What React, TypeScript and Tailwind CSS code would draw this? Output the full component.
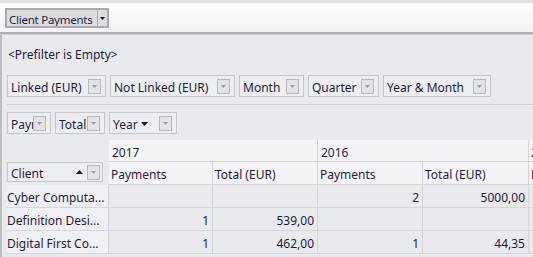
import React from "react";

const font = "font-['Segoe_UI','Noto_Sans','Open_Sans',sans-serif]";

const DropSquare = () => (
  <span className="flex h-[15px] w-[13px] shrink-0 items-center justify-center border border-[#b9babe] bg-[#e2e3e6]">
    <svg width="5" height="3" viewBox="0 0 5 3">
      <path d="M0 0h5L2.5 3z" fill="#9c9da1" />
    </svg>
  </span>
);

const FieldButton = ({
  label,
  width,
  sort,
}: {
  label: string;
  width: string;
  sort?: "up" | "down";
}) => (
  <div
    className={`flex h-[22px] ${width} shrink-0 items-center border border-[#c6c7cb] bg-[#eceef1] pl-[3px] pr-[4px]`}
  >
    <span className="min-w-0 flex-1 overflow-hidden whitespace-nowrap pt-[4px] leading-[16px]">
      {label}
    </span>
    {sort === "down" && (
      <svg width="7" height="4" viewBox="0 0 7 4" className="mr-[11px] mt-[2px]">
        <path d="M0 0h7L3.5 4z" fill="#1a1a2e" />
      </svg>
    )}
    {sort === "up" && (
      <svg width="7" height="4" viewBox="0 0 7 4" className="mr-[4px]">
        <path d="M0 4h7L3.5 0z" fill="#1a1a2e" />
      </svg>
    )}
    <DropSquare />
  </div>
);

const rows = [
  { client: "Cyber Computa...", p17: "", t17: "", p16: "2", t16: "5000,00" },
  { client: "Definition Desi...", p17: "1", t17: "539,00", p16: "", t16: "" },
  { client: "Digital First Co...", p17: "1", t17: "462,00", p16: "1", t16: "44,35" },
];

const cell = "flex items-center pt-[4px] border-[#d4d5d9]";

export default function App() {
  return (
    <div
      className={`h-[257px] w-[533px] overflow-hidden bg-[#e9eaee] text-[12px] leading-[16px] text-[#1f1d3b] ${font}`}
    >
      <div className="h-[3px] bg-[#dfe0e4]" />
      <div className="h-[29px] bg-gradient-to-b from-white to-[#f1f2f5] pl-[5px] pt-[5px]">
        <div className="flex h-[20px] w-[104px] items-stretch border-2 border-[#a9abaf] bg-[#dcdde1]">
          <span className="min-w-0 flex-1 overflow-hidden whitespace-nowrap pl-[2px] pt-[4px] text-[11.5px] leading-[12px] tracking-[-0.25px]">
            Client Payments
          </span>
          <span className="flex w-[10px] shrink-0 items-center justify-center border-l border-[#a9abaf]">
            <svg width="5" height="3" viewBox="0 0 5 3">
              <path d="M0 0h5L2.5 3z" fill="#1a1a2e" />
            </svg>
          </span>
        </div>
      </div>
      <div className="h-[2px] bg-[#aeb0b4]" />
      <div className="h-[1px] bg-[#cfd0d4]" />

      <div className="h-[222px] border-l-2 border-[#bcbdc1] pl-[5px]">
        <div className="pl-[1px] pt-[12px]">&lt;Prefilter is Empty&gt;</div>

        <div className="mt-[12px] flex gap-[4px]">
          <FieldButton label="Linked (EUR)" width="w-[99px]" />
          <FieldButton label="Not Linked (EUR)" width="w-[125px]" />
          <FieldButton label="Month" width="w-[65px]" />
          <FieldButton label="Quarter" width="w-[71px]" />
          <FieldButton label="Year & Month" width="w-[108px]" />
        </div>

        <div className="mt-[7px] h-[1px] bg-[#cfd0d4]" />

        <div className="mt-[7px] flex gap-[4px]">
          <FieldButton label="Payments" width="w-[44px]" />
          <FieldButton label="Total" width="w-[50px]" />
          <FieldButton label="Year" width="w-[68px]" sort="down" />
        </div>

        <div className="mt-[6px] grid grid-cols-[102px_104px_105px_105px_106px_20px]">
          {/* year header row */}
          <div className="h-[22px]" />
          <div className={`${cell} col-span-2 h-[22px] border-b border-r bg-[#f4f4f6] pl-[3px]`}>
            2017
          </div>
          <div className={`${cell} col-span-2 h-[22px] border-b border-r bg-[#f4f4f6] pl-[3px]`}>
            2016
          </div>
          <div className={`${cell} h-[22px] overflow-hidden border-b bg-[#f4f4f6] pl-[2px]`}>
            2015
          </div>

          {/* measure header row */}
          <div className="h-[23px] pr-[6px] pb-[3px]">
            <div className="flex h-[20px] items-center border border-[#c6c7cb] bg-[#eceef1] pl-[3px] pr-[2px]">
              <span className="flex-1 pt-[3px]">Client</span>
              <svg width="7" height="4" viewBox="0 0 7 4" className="mr-[4px]">
                <path d="M0 4h7L3.5 0z" fill="#1a1a2e" />
              </svg>
              <DropSquare />
            </div>
          </div>
          {["Payments", "Total (EUR)", "Payments", "Total (EUR)"].map((h, i) => (
            <div
              key={i}
              className={`${cell} h-[23px] border-b border-r bg-[#f4f4f6] pl-[2px]`}
            >
              {h}
            </div>
          ))}
          <div className={`${cell} h-[23px] overflow-hidden whitespace-nowrap border-b bg-[#f4f4f6] pl-[2px]`}>
            Payments
          </div>

          {rows.map((r) => (
            <React.Fragment key={r.client}>
              <div className={`${cell} h-[23px] whitespace-nowrap border-b border-r bg-[#eff0f3]`}>
                {r.client}
              </div>
              {[r.p17, r.t17, r.p16, r.t16].map((v, i) => (
                <div
                  key={i}
                  className={`${cell} h-[23px] justify-end border-b border-r pr-[3px]`}
                >
                  {v}
                </div>
              ))}
              <div className="h-[23px] border-b border-[#d4d5d9]" />
            </React.Fragment>
          ))}
        </div>
      </div>
    </div>
  );
}
